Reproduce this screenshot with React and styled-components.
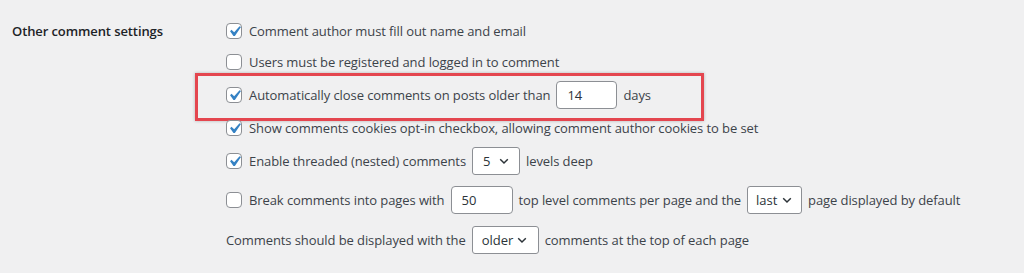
import React from "react";
import styled, { createGlobalStyle } from "styled-components";

const Global = createGlobalStyle`
  html, body { margin: 0; padding: 0; background: #f0f0f1; }
  body { font-family: "Open Sans", "Noto Sans", sans-serif; font-size: 13px; color: #3c434a; }
`;

const Page = styled.div`
  display: flex;
  width: 1024px;
  height: 273px;
  box-sizing: border-box;
  padding-top: 15px;
  background: #f0f0f1;
`;

const Label = styled.div`
  width: 226px;
  padding-left: 12px;
  box-sizing: border-box;
  height: 31px;
  display: flex;
  align-items: center;
  font-weight: 600;
  font-size: 13px;
  letter-spacing: -0.1px;
  color: #1d2327;
`;

const Fields = styled.div`
  display: flex;
  flex-direction: column;
`;

const Row = styled.div`
  position: relative;
  display: flex;
  align-items: center;
  height: ${(p) => p.$h}px;
  white-space: nowrap;
`;

const Box = styled.span`
  width: 16px;
  height: 16px;
  box-sizing: border-box;
  border: 1px solid #8c8f94;
  border-radius: 4px;
  background: #fff;
  margin-right: 7px;
  position: relative;
  flex: none;
  svg { position: absolute; left: -3px; top: -3px; }
`;

const Text = styled.span`
  letter-spacing: -0.09px;
`;

const Input = styled.span`
  display: inline-flex;
  align-items: center;
  box-sizing: border-box;
  width: ${(p) => p.$w}px;
  height: 28px;
  padding: 0 10px;
  margin: 0 6px;
  background: #fff;
  border: 1px solid #8c8f94;
  border-radius: 4px;
  color: #2c3338;
  font-size: 13px;
  flex: none;
`;

const Select = styled(Input)`
  justify-content: space-between;
  padding: 0 ${(p) => p.$pr}px 0 ${(p) => p.$pl}px;
  border-radius: 3px;
  svg { flex: none; }
`;

const Highlight = styled.div`
  position: absolute;
  left: -31px;
  top: -4px;
  width: 509px;
  height: 48px;
  box-sizing: border-box;
  border: 3px solid #e4464f;
  box-shadow: 0 0 3px rgba(0, 0, 0, 0.25);
  pointer-events: none;
`;

const Check = () => (
  <svg width="21" height="21" viewBox="0 0 20 20">
    <path d="M14.83 4.89l1.34.94-5.81 8.38H9.02L5.78 9.67l1.34-1.25 2.57 2.4z" fill="#3582c4" />
  </svg>
);

const Chevron = () => (
  <svg width="12" height="12" viewBox="0 0 12 12">
    <path d="M2.2 4.3 L6 8 L9.8 4.3" fill="none" stroke="#2c3338" strokeWidth="1.5" />
  </svg>
);

const CheckBox = ({ on }) => <Box>{on && <Check />}</Box>;

export default function App() {
  return (
    <>
      <Global />
      <Page>
        <Label>Other comment settings</Label>
        <Fields>
          <Row $h={31}>
            <CheckBox on />
            <Text>Comment author must fill out name and email</Text>
          </Row>
          <Row $h={31}>
            <CheckBox />
            <Text>Users must be registered and logged in to comment</Text>
          </Row>
          <Row $h={35}>
            <CheckBox on />
            <Text>Automatically close comments on posts older than</Text>
            <Input $w={61}>14</Input>
            <Text>days</Text>
            <Highlight />
          </Row>
          <Row $h={31}>
            <CheckBox on />
            <Text>Show comments cookies opt-in checkbox, allowing comment author cookies to be set</Text>
          </Row>
          <Row $h={35}>
            <CheckBox on />
            <Text>Enable threaded (nested) comments</Text>
            <Select $w={48} $pl={10} $pr={9}>5<Chevron /></Select>
            <Text>levels deep</Text>
          </Row>
          <Row $h={43}>
            <CheckBox />
            <Text>Break comments into pages with</Text>
            <Input $w={62}>50</Input>
            <Text>top level comments per page and the</Text>
            <Select $w={55} $pl={8} $pr={8}>last<Chevron /></Select>
            <Text>page displayed by default</Text>
          </Row>
          <Row $h={37}>
            <Text>Comments should be displayed with the</Text>
            <Select $w={67} $pl={9} $pr={10}>older<Chevron /></Select>
            <Text>comments at the top of each page</Text>
          </Row>
        </Fields>
      </Page>
    </>
  );
}
